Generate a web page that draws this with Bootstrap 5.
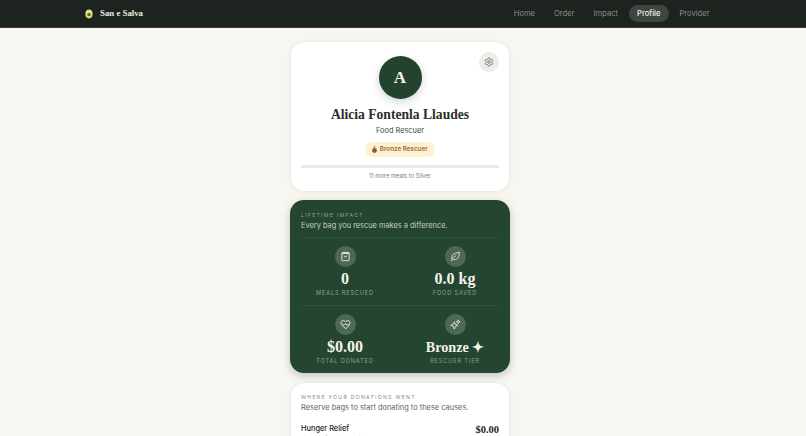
<!DOCTYPE html>
<html lang="en">
<head>
  <meta charset="UTF-8">
  <title>Profile - San e Salva</title>
  <meta name="viewport" content="width=device-width, initial-scale=1">
  <link href="https://cdn.jsdelivr.net/npm/bootstrap@5.3.0/dist/css/bootstrap.min.css" rel="stylesheet">
  <style>
    html, body { height: 436px; overflow: hidden; }
    body { background: #f8f6f1; font-family: Inter, "Liberation Sans", sans-serif; color: #1f2421; }
    .serif { font-family: "Liberation Serif", serif; }
    .top-bar { height: 28px; background: #1d231f; border-bottom: 1px solid #3a403b; }
    .top-inner { width: 636px; height: 27px; padding-right: 2px; }
    .brand-gap { gap: 7px; }
    .brand-name { font-size: 8.8px; font-weight: 700; color: #ecebe4; }
    .top-link { font-size: 7.6px; color: #8b908b; padding: 0 9.5px; height: 17px; line-height: 17px; border-radius: 9px; text-decoration: none; }
    .top-link.on { background: #3f4541; color: #f1f0ea; font-weight: 500; padding: 0 8.5px; margin: 0 1px; }
    .page-wrap { width: 800px; }
    .page-col { width: 220px; padding-top: 13px; }
    .panel { background: #fff; border: 1px solid #eeebe4; border-radius: 14px; box-shadow: 0 1px 4px rgba(40,40,30,.05); }
    .profile-panel { height: 151px; padding-top: 14px; }
    .gear-btn { top: 10px; right: 10px; width: 20px; height: 20px; background: #efece7; color: #666; }
    .avatar { width: 43px; height: 43px; background: #23432f; color: #f7f5ee; font-size: 17px; font-weight: 700; box-shadow: 0 3px 8px rgba(35,67,47,.22); }
    .person-name { font-size: 13.6px; font-weight: 700; line-height: 18px; margin-top: 7px; color: #2b2e2b; }
    .person-role { font-size: 7.4px; line-height: 11px; margin-top: 1px; color: #3d4a42; }
    .tier-pill { height: 15px; margin-top: 6px; padding: 0 7px; font-size: 6.3px; font-weight: 600; color: #a5672c; background: #fdf1d2; border-radius: 8px; gap: 2.500px; }
    .tier-wrap { height: 3px; margin: 8px 10px 0; background: #eeebe6; border-radius: 2px; }
    .tier-note { font-size: 5.8px; line-height: 8px; margin-top: 4px; color: #78807b; }
    .impact-panel { height: 173px; margin-top: 8px; background: #24452f; border-radius: 14px; padding-top: 11px; box-shadow: 0 3px 8px rgba(30,50,38,.25); color: #f3f2ea; }
    .impact-head { padding: 0 11px; }
    .eyebrow { font-size: 5.2px; line-height: 8px; letter-spacing: 1.25px; text-transform: uppercase; }
    .impact-panel .eyebrow { color: #8fa296; }
    .impact-sub { font-size: 7.4px; line-height: 11px; margin-top: 1px; color: #c4cec6; }
    .impact-rule { border-top: 1px solid #304f3b; margin: 0 11px; }
    .impact-rule.first { margin-top: 6px; }
    .impact-row { height: 67px; }
    .stat-cell { width: 50%; padding-top: 8px; }
    .stat-dot { width: 21px; height: 21px; background: #4d6856; color: #e8ebe2; }
    .stat-val { font-size: 16px; line-height: 18px; margin-top: 3px; font-weight: 700; color: #f4f3eb; }
    .stat-val.wordy { font-size: 14.2px; }
    .stat-cap { font-size: 5.7px; line-height: 8px; margin-top: 1px; letter-spacing: .8px; text-transform: uppercase; color: #8ba192; }
    .cause-panel { height: 80px; margin-top: 9px; padding: 10px 10px 0; }
    .cause-panel .eyebrow { color: #858a86; }
    .cause-sub { font-size: 7.45px; line-height: 11px; margin-top: 1px; color: #5d645f; }
    .cause-row { margin-top: 10px; }
    .cause-name { font-size: 7.4px; line-height: 11px; font-weight: 500; color: #202421; }
    .cause-note { font-size: 5.8px; line-height: 8px; margin-top: 1px; color: #858a86; }
    .cause-amt { font-size: 10.5px; font-weight: 700; line-height: 14px; color: #252825; }
  </style>
</head>
<body>
  <nav class="top-bar d-flex justify-content-center">
    <div class="top-inner d-flex align-items-center justify-content-between">
      <div class="d-flex align-items-center brand-gap">
        <svg width="8" height="10" viewBox="0 0 8 10"><ellipse cx="4" cy="5" rx="3.6" ry="4.4" fill="#d6e07c"/><circle cx="4" cy="5.6" r="1.7" fill="#6d5a22"/></svg>
        <span class="brand-name serif">San e Salva</span>
      </div>
      <div class="d-flex align-items-center">
        <a class="top-link" href="#">Home</a>
        <a class="top-link" href="#">Order</a>
        <a class="top-link" href="#">Impact</a>
        <a class="top-link on" href="#">Profile</a>
        <a class="top-link" href="#">Provider</a>
      </div>
    </div>
  </nav>

  <div class="page-wrap">
  <main class="page-col mx-auto">
    <section class="panel profile-panel position-relative d-flex flex-column align-items-center text-center">
      <button class="gear-btn position-absolute border-0 rounded-circle d-flex align-items-center justify-content-center p-0" aria-label="Settings">
        <svg width="10" height="10" viewBox="0 0 24 24" fill="none" stroke="currentColor" stroke-width="2" stroke-linejoin="round"><path d="M12.220 2h-.44a2 2 0 0 0-2 2v.18a2 2 0 0 1-1 1.730l-.43.25a2 2 0 0 1-2 0l-.15-.08a2 2 0 0 0-2.730.73l-.22.38a2 2 0 0 0 .73 2.730l.15.1a2 2 0 0 1 1 1.720v.51a2 2 0 0 1-1 1.740l-.15.09a2 2 0 0 0-.73 2.730l.22.38a2 2 0 0 0 2.730.73l.15-.08a2 2 0 0 1 2 0l.43.25a2 2 0 0 1 1 1.730V20a2 2 0 0 0 2 2h.44a2 2 0 0 0 2-2v-.18a2 2 0 0 1 1-1.730l.43-.25a2 2 0 0 1 2 0l.15.08a2 2 0 0 0 2.730-.73l.22-.39a2 2 0 0 0-.73-2.730l-.15-.08a2 2 0 0 1-1-1.740v-.5a2 2 0 0 1 1-1.740l.15-.09a2 2 0 0 0 .73-2.730l-.22-.38a2 2 0 0 0-2.730-.73l-.15.08a2 2 0 0 1-2 0l-.43-.25a2 2 0 0 1-1-1.730V4a2 2 0 0 0-2-2z"/><circle cx="12" cy="12" r="3"/></svg>
      </button>
      <div class="avatar serif rounded-circle d-flex align-items-center justify-content-center">A</div>
      <h1 class="person-name serif mb-0">Alicia Fontenla Llaudes</h1>
      <div class="person-role">Food Rescuer</div>
      <div class="tier-pill d-flex align-items-center">
        <svg width="5" height="7" viewBox="0 0 10 14"><rect x="3.500" y="0" width="3" height="4" fill="#c98a4a"/><circle cx="5" cy="9" r="4.800" fill="#8a5a3a"/></svg>
        <span>Bronze Rescuer</span>
      </div>
      <div class="tier-wrap align-self-stretch"></div>
      <div class="tier-note">11 more meals to Silver</div>
    </section>

    <section class="impact-panel">
      <div class="impact-head">
        <div class="eyebrow">Lifetime Impact</div>
        <div class="impact-sub">Every bag you rescue makes a difference.</div>
      </div>
      <div class="impact-rule first"></div>
      <div class="impact-row d-flex">
        <div class="stat-cell d-flex flex-column align-items-center">
          <div class="stat-dot rounded-circle d-flex align-items-center justify-content-center">
            <svg width="11" height="11" viewBox="0 0 24 24" fill="none" stroke="currentColor" stroke-width="2" stroke-linejoin="round"><path d="M4 5h16v15a1 1 0 0 1-1 1H5a1 1 0 0 1-1-1z"/><path d="M6 3h12l2 2H4z"/><path d="M9 10a3 3 0 0 0 6 0"/></svg>
          </div>
          <div class="stat-val serif">0</div>
          <div class="stat-cap">Meals Rescued</div>
        </div>
        <div class="stat-cell d-flex flex-column align-items-center">
          <div class="stat-dot rounded-circle d-flex align-items-center justify-content-center">
            <svg width="11" height="11" viewBox="0 0 24 24" fill="none" stroke="currentColor" stroke-width="2" stroke-linecap="round" stroke-linejoin="round"><path d="M20 3c1 9-3 16-11 16-3 0-5-2-5-5 0-7 8-10 16-11z"/><path d="M3 21c2-5 6-9 10-11"/></svg>
          </div>
          <div class="stat-val serif">0.0 kg</div>
          <div class="stat-cap">Food Saved</div>
        </div>
      </div>
      <div class="impact-rule"></div>
      <div class="impact-row d-flex">
        <div class="stat-cell d-flex flex-column align-items-center">
          <div class="stat-dot rounded-circle d-flex align-items-center justify-content-center">
            <svg width="11" height="11" viewBox="0 0 24 24" fill="none" stroke="currentColor" stroke-width="2" stroke-linecap="round" stroke-linejoin="round"><path d="M12 21L3.500 12.500a5.300 5.300 0 0 1 7.500-7.500l1 1 1-1a5.300 5.300 0 0 1 7.500 7.500z"/><path d="M7 12h3l2-2 2 3 1-1h3"/></svg>
          </div>
          <div class="stat-val serif">$0.00</div>
          <div class="stat-cap">Total Donated</div>
        </div>
        <div class="stat-cell d-flex flex-column align-items-center">
          <div class="stat-dot rounded-circle d-flex align-items-center justify-content-center">
            <svg width="11" height="11" viewBox="0 0 24 24" fill="none" stroke="currentColor" stroke-width="2" stroke-linejoin="round"><path d="M9.500 6l2.200 5.800 5.800 2.200-5.800 2.200-2.200 5.800-2.200-5.800L1.500 14l5.800-2.200z"/><path d="M18 2l1.200 2.800L22 6l-2.800 1.200L18 10l-1.200-2.800L14 6l2.800-1.200z"/></svg>
          </div>
          <div class="stat-val wordy serif">Bronze &#10022;</div>
          <div class="stat-cap">Rescuer Tier</div>
        </div>
      </div>
    </section>

    <section class="panel cause-panel">
      <div class="eyebrow">Where Your Donations Went</div>
      <div class="cause-sub">Reserve bags to start donating to these causes.</div>
      <div class="cause-row d-flex justify-content-between">
        <div>
          <div class="cause-name">Hunger Relief</div>
          <div class="cause-note">Fighting food insecurity</div>
        </div>
        <div class="cause-amt serif">$0.00</div>
      </div>
    </section>
  </main>
  </div>

  <script src="https://cdn.jsdelivr.net/npm/bootstrap@5.3.0/dist/js/bootstrap.bundle.min.js"></script>
</body>
</html>
